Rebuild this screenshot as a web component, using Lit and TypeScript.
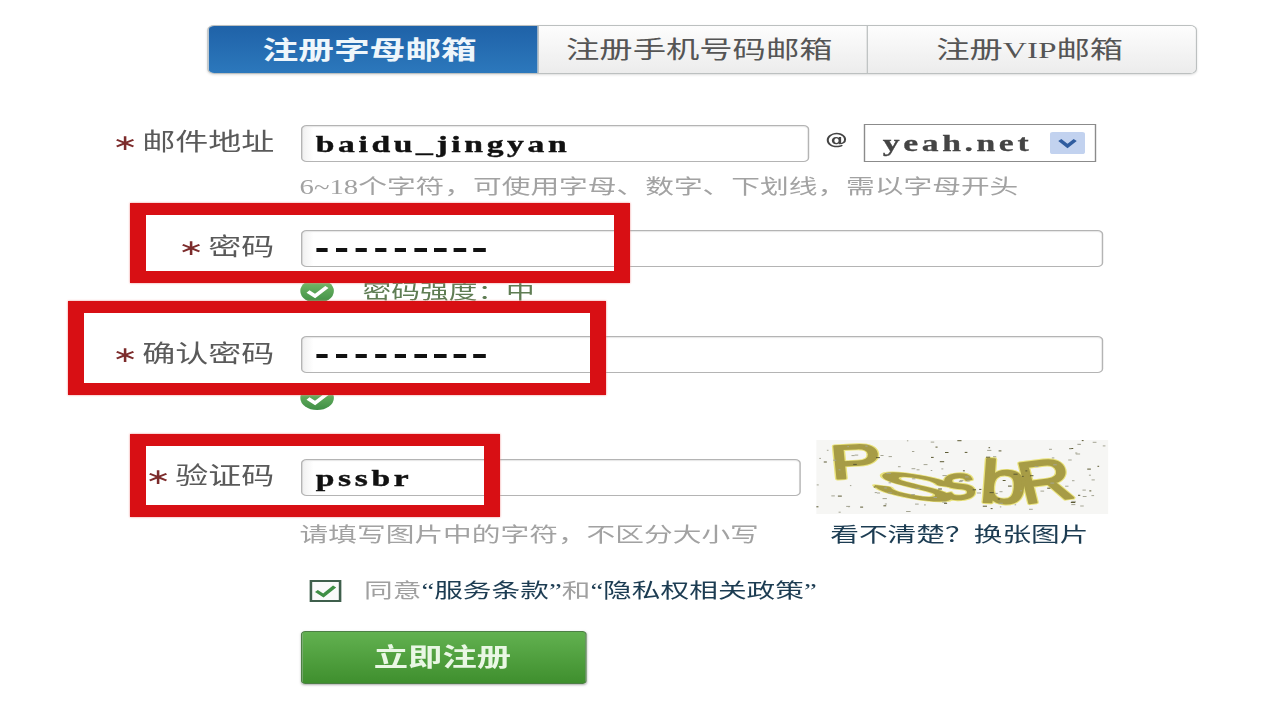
import { LitElement, html, css, svg } from "lit";
import { customElement } from "lit/decorators.js";

const checkIcon = html`<svg class="ok" viewBox="0 0 25 24">
  <defs><linearGradient id="g" x1="0" y1="0" x2="0" y2="1"><stop offset="0" stop-color="#79bd6c"/><stop offset="1" stop-color="#3f8f45"/></linearGradient></defs>
  <circle cx="12.5" cy="12" r="12" fill="url(#g)"/>
  <path d="M6 12.5 L11 17 L19.5 8" fill="none" stroke="#fff" stroke-width="3.2"/>
</svg>`;

function noise() {
  const out = [];
  let s = 7;
  const r = () => (s = (s * 16807) % 2147483647) / 2147483647;
  for (let i = 0; i < 120; i++) {
    const x = r() * 206, y = r() * 72, w = 1 + r() * 2.2;
    out.push(svg`<rect x=${x.toFixed(1)} y=${y.toFixed(1)} width=${w.toFixed(1)} height="1" fill=${i % 3 ? "#a5a594" : "#5c5a34"}/>`);
  }
  return out;
}

const letters = svg`
  <text transform="translate(11 39) rotate(-4) scale(1.1 0.95)" font-size="50">P</text>
  <text transform="translate(38 50) rotate(14) scale(2 0.7)" font-size="46">S</text>
  <text transform="translate(92 60) rotate(-6)" font-size="46">s</text>
  <text transform="translate(116 62) rotate(3)" font-size="60">b</text>
  <text transform="translate(148 64) rotate(-10) scale(0.95 1.05)" font-size="56">R</text>`;

const captcha = html`<svg class="captcha" viewBox="0 0 208.6 74" preserveAspectRatio="none">
  <rect width="208.6" height="74" fill="#f6f6f4"/>
  <g font-family="Liberation Sans, sans-serif" fill="#e9e27a" stroke="#e9e27a" stroke-width="3.6" stroke-linejoin="round">${letters}</g>
  <g font-family="Liberation Sans, sans-serif" fill="#a79c46" stroke="#a79c46" stroke-width="1.8" stroke-linejoin="round">${letters}</g>
  ${noise()}
</svg>`;

const dashes = html`<div class="dashes">${Array.from({ length: 9 }, () => html`<i></i>`)}</div>`;

@customElement("app-root")
export class AppRoot extends LitElement {
  static styles = css`
    :host { display: block; position: relative; width: 1280px; height: 720px; overflow: hidden; background: #fff;
      font-family: "Liberation Serif", "Noto Sans CJK SC", serif; color: #555; }
    .stage { width: 914.3px; transform: scaleX(1.4); transform-origin: 0 0; display: flex; flex-direction: column; filter: blur(0.4px); padding-top: 25px; box-sizing: border-box; }
    .tabs { margin-left: 148px; width: 707px; height: 49px; display: grid; grid-template-columns: 235px 235px 237px; box-sizing: border-box;
      border: 1px solid #bcc0c0; border-radius: 5px; overflow: hidden; box-shadow: 0 1px 2px #ddd; }
    .tab { display: flex; align-items: center; justify-content: center; font-size: 23.8px; color: #555; padding: 0 5px 5px 0; box-sizing: border-box;
      background: linear-gradient(#fdfdfd, #ececec); border-left: 1px solid #c0c4c4; }
    .tab.on { background: linear-gradient(#1f62a8, #2c78bc); color: #eef6fb; font-weight: 700; font-size: 25.5px; border: 0; }
    .row { display: grid; grid-template-columns: 196px 1fr; column-gap: 19px; align-items: center; }
    .label { display: flex; justify-content: flex-end; align-items: center; gap: 3px; font-size: 23.6px; line-height: 1; color: #5a5a5a; }
    .star { font-family: "DejaVu Sans", sans-serif; color: #7c2b2b; font-size: 22px; }
    .input { height: 37px; box-sizing: border-box; border: 1px solid #b4b4b4; border-radius: 4px; background: linear-gradient(90deg, #f0f0f0, #fff 8px);
      display: flex; align-items: center; padding: 3px 0 0 9.5px; font: 700 24px "Liberation Serif", serif; letter-spacing: 2.6px; -webkit-text-stroke: 0.4px #111; color: #111; box-shadow: inset 0 1px 1px #e4e4e4; }
    .r1 { margin-top: 50px; height: 38px; }
    .r1 .c { display: flex; align-items: center; }
    .r1 .input { width: 363px; }
    .at { width: 39px; text-align: center; font: 700 16px "DejaVu Sans", sans-serif; color: #444; position: relative; bottom: 4px; }
    .select { width: 166px; height: 38px; box-sizing: border-box; border: 1.5px solid #8b8b8b; display: flex; align-items: center; justify-content: space-between;
      padding: 0 7px 0 12.5px; font: 700 24px "Liberation Serif", serif; letter-spacing: 2.6px; -webkit-text-stroke: 0.3px #444; color: #444; }
    .arrow { width: 25px; height: 22px; background: #c2d2ef; border-radius: 2px; display: flex; align-items: center; justify-content: center; }
    .arrow svg { width: 15px; height: 12px; }
    .hint { margin-left: 214px; font-size: 20.5px; line-height: 20px; color: #a2a2a2; white-space: nowrap; }
    .h1 { margin-top: 13px; height: 20px; padding-top: 2px; }
    .r2 { margin-top: 33px; }
    .r2 .label { position: relative; bottom: 1px; }
    .r3 { margin-top: 33px; }
    .wide { width: 573px; }
    .dashes { display: flex; gap: 5.5px; }
    .dashes i { width: 8.6px; height: 4px; background: #111; }
    .status { margin-left: 214px; height: 24px; display: flex; align-items: center; font-size: 20.5px; color: #5f7d54; white-space: nowrap; }
    .s1 { margin-top: 12px; }
    .s1 span { position: relative; bottom: 1px; }
    .s2 { margin-top: 13px; }
    .ok { width: 25px; height: 24px; margin-right: 20px; flex: none; }
    .r4 { margin-top: 30px; height: 74px; }
    .r4 .c { display: flex; align-items: center; gap: 11px; }
    .short { width: 357px; }
    .captcha { width: 208.6px; height: 74px; }
    .h2 { margin-top: 9px; height: 20px; display: grid; grid-template-columns: 379px auto; padding-top: 2px; }
    .link { color: #1c3c52; }
    .terms { margin: 32px 0 0 221px; height: 24px; display: flex; align-items: center; font-size: 20.5px; color: #a0a0a0; white-space: nowrap; }
    .box { width: 23px; height: 22px; margin-right: 16px; flex: none; position: relative; top: 2px; }
    .terms b { font-weight: 400; color: #1c3c52; }
    .btn { margin: 30px 0 0 215px; width: 204px; height: 53px; box-sizing: border-box; border: 1px solid #4d7f45; border-radius: 3px; padding: 0 2px 4px 0;
      background: linear-gradient(#62b150, #3f8f2e); color: #e9f7e4; font-size: 24.5px; font-weight: 700; display: flex; align-items: center; justify-content: center; box-shadow: 0 1px 2px #aaa; }
    .mark { position: absolute; box-sizing: border-box; border: solid #d80f14; border-width: 12px 16px; box-shadow: 0 0 2px #e88; }
    .m1 { left: 130px; top: 203px; width: 500px; height: 80px; }
    .m2 { left: 68px; top: 301px; width: 538px; height: 94px; }
    .m3 { left: 130px; top: 434px; width: 370px; height: 83px; }
  `;

  render() {
    return html`
      <div class="stage">
        <div class="tabs">
          <div class="tab on">注册字母邮箱</div>
          <div class="tab">注册手机号码邮箱</div>
          <div class="tab">注册VIP邮箱</div>
        </div>
        <div class="row r1">
          <div class="label"><span class="star">∗</span>邮件地址</div>
          <div class="c">
            <div class="input">baidu_jingyan</div>
            <div class="at">@</div>
            <div class="select">yeah.net
              <span class="arrow"><svg viewBox="0 0 15 12"><path d="M2 3 L7.5 9 L13 3" fill="none" stroke="#2f5c9f" stroke-width="3"/></svg></span>
            </div>
          </div>
        </div>
        <div class="hint h1">6~18个字符，可使用字母、数字、下划线，需以字母开头</div>
        <div class="row r2">
          <div class="label"><span class="star">∗</span>密码</div>
          <div class="input wide">${dashes}</div>
        </div>
        <div class="status s1">${checkIcon}<span>密码强度：中</span></div>
        <div class="row r3">
          <div class="label"><span class="star">∗</span>确认密码</div>
          <div class="input wide">${dashes}</div>
        </div>
        <div class="status s2">${checkIcon}</div>
        <div class="row r4">
          <div class="label"><span class="star">∗</span>验证码</div>
          <div class="c"><div class="input short">pssbr</div>${captcha}</div>
        </div>
        <div class="hint h2"><span>请填写图片中的字符，不区分大小写</span><span class="link">看不清楚？换张图片</span></div>
        <div class="terms">
          <svg class="box" viewBox="0 0 23 22"><rect x="1" y="1" width="21" height="20" fill="#fafafa" stroke="#3f5f4c" stroke-width="2"/><path d="M5 11 L10 15.5 L18 6.5" fill="none" stroke="#3f8f45" stroke-width="3"/></svg>
          <span>同意<b>“服务条款”</b>和<b>“隐私权相关政策”</b></span>
        </div>
        <div class="btn">立即注册</div>
      </div>
      <div class="mark m1"></div>
      <div class="mark m2"></div>
      <div class="mark m3"></div>
    `;
  }
}
